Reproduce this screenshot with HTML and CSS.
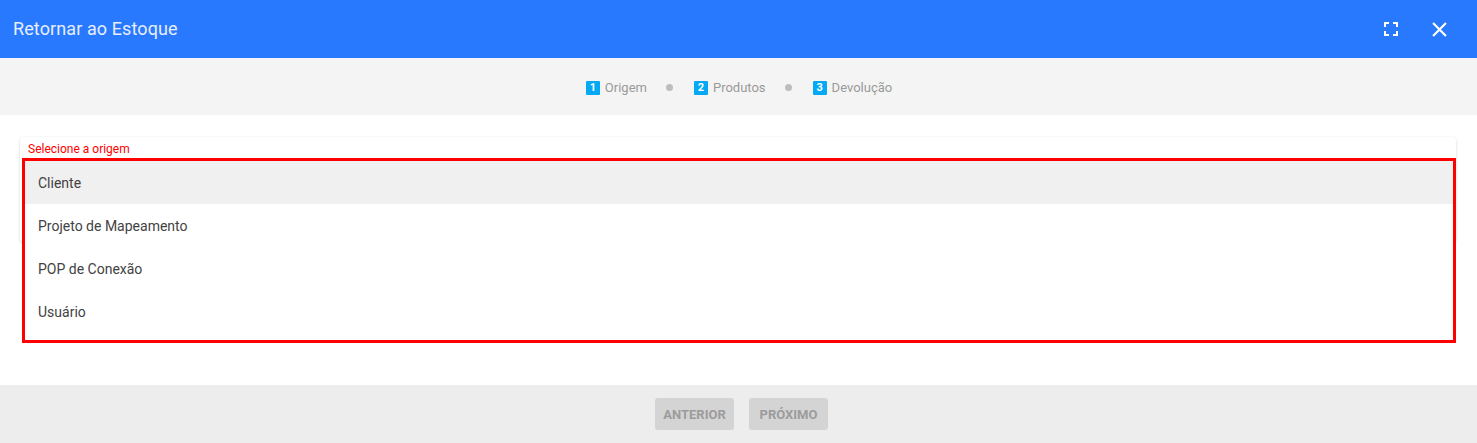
FILE: index.html
```html
<!DOCTYPE html>
<html lang="pt">
<head>
<meta charset="utf-8">
<link rel="stylesheet" href="styles.css">
</head>
<body>
<div class="dialog">
  <header class="topbar">
    <h1 class="title">Retornar ao Estoque</h1>
    <div class="actions">
      <svg class="icon" width="14" height="14" viewBox="0 0 14 14"><path d="M1 5V1h4M9 1h4v4M13 9v4H9M5 13H1V9" fill="none" stroke="#fff" stroke-width="2"/></svg>
      <svg class="icon close" width="14" height="14" viewBox="0 0 14 14"><path d="M1 1L13 13M13 1L1 13" fill="none" stroke="#fff" stroke-width="2"/></svg>
    </div>
  </header>
  <nav class="stepper">
    <div class="step"><span class="badge">1</span><span class="label">Origem</span></div>
    <span class="dot"></span>
    <div class="step"><span class="badge">2</span><span class="label">Produtos</span></div>
    <span class="dot"></span>
    <div class="step"><span class="badge">3</span><span class="label">Devolução</span></div>
  </nav>
  <main class="content">
    <div class="field">
      <div class="field-label">Selecione a origem</div>
      <ul class="menu">
        <li class="item active">Cliente</li>
        <li class="item">Projeto de Mapeamento</li>
        <li class="item">POP de Conexão</li>
        <li class="item">Usuário</li>
      </ul>
    </div>
  </main>
  <footer class="footer">
    <button class="btn">ANTERIOR</button>
    <button class="btn">PRÓXIMO</button>
  </footer>
</div>
</body>
</html>
```
FILE: styles.css
```css
html, body {
  margin: 0;
  padding: 0;
  background: #fff;
  font-family: Roboto, "Liberation Sans", Arial, sans-serif;
}
.dialog {
  width: 1477px;
  height: 443px;
  display: flex;
  flex-direction: column;
}
.topbar {
  height: 58px;
  background: #2979ff;
  display: flex;
  align-items: center;
  justify-content: space-between;
  padding: 0 30px 2px 13px;
  box-sizing: border-box;
  flex: none;
}
.title {
  margin: 0;
  font-size: 18px;
  font-weight: 400;
  color: #e6eeff;
  letter-spacing: 0.1px;
}
.actions {
  display: flex;
  align-items: center;
  gap: 33px;
  padding-top: 2px;
}
.icon { display: block; }
.icon.close { width: 15px; height: 15px; margin-left: 1px; }
.stepper {
  height: 57px;
  background: #f4f4f4;
  display: flex;
  align-items: center;
  justify-content: center;
  flex: none;
  padding-left: 1px;
  padding-top: 2px;
  box-sizing: border-box;
}
.step {
  display: flex;
  align-items: center;
  gap: 5px;
}
.badge {
  width: 14px;
  height: 14px;
  background: #03a9f4;
  color: #fff;
  font-size: 11px;
  font-weight: 700;
  line-height: 14px;
  text-align: center;
  border-radius: 1px;
}
.label {
  font-size: 13px;
  color: #9a9a9a;
}
.dot {
  width: 7px;
  height: 7px;
  border-radius: 50%;
  background: #bdbdbd;
  margin: 0 21px 0 19px;
}
.content {
  height: 270px;
  padding: 22px 21px 0 20px;
  box-sizing: border-box;
  flex: none;
}
.field {
  position: relative;
  height: 105px;
  background: #fff;
  border-radius: 4px;
  box-shadow: 0 1px 3px rgba(0,0,0,0.18);
}
.field-label {
  padding: 5px 0 0 8px;
  font-size: 12px;
  line-height: 14px;
  color: #ff0000;
}
.menu {
  position: absolute;
  top: 21px;
  left: 2px;
  right: 0;
  margin: 0;
  padding: 0 0 7px;
  list-style: none;
  background: #fff;
  border: 3px solid #ff0000;
}
.item {
  height: 43px;
  display: flex;
  align-items: center;
  padding-left: 13px;
  font-size: 14px;
  color: #424242;
}
.item.active { background: #f0f0f0; }
.footer {
  flex: 1;
  background: #ededed;
  display: flex;
  align-items: center;
  justify-content: center;
  gap: 15px;
  padding-left: 6px;
}
.btn {
  width: 79px;
  height: 32px;
  border: none;
  border-radius: 3px;
  background: #d4d4d4;
  color: #9c9c9c;
  font-family: Roboto, "Liberation Sans", Arial, sans-serif;
  font-size: 13px;
  font-weight: 700;
  padding: 0;
}
```
